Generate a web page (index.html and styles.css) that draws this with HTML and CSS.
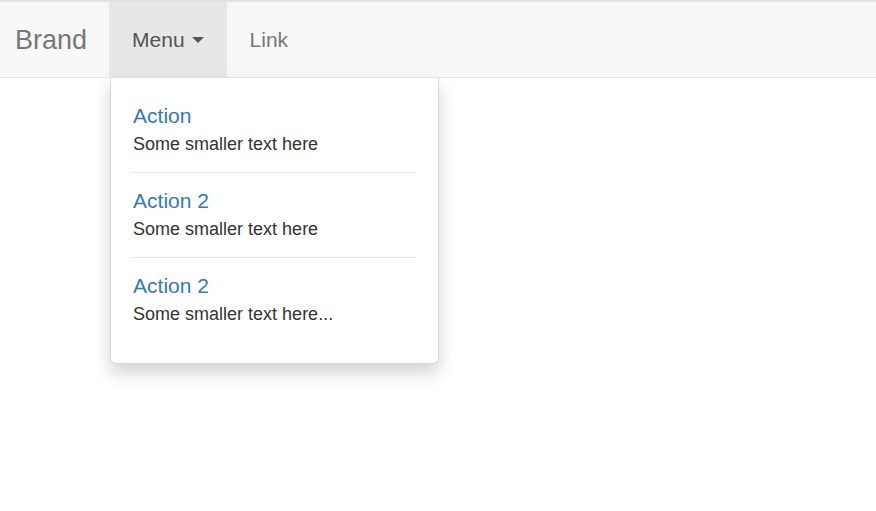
FILE: index.html
```html
<!DOCTYPE html>
<html lang="en">
<head>
<meta charset="UTF-8">
<meta name="viewport" content="width=device-width, initial-scale=1.0">
<title>Navbar dropdown</title>
<link rel="stylesheet" href="styles.css">
</head>
<body>
<nav class="navbar">
    <a class="brand" href="#">Brand</a>
    <ul class="nav">
        <li class="dropdown open">
            <a href="#" class="nav-link">Menu <span class="caret"></span></a>
            <ul class="dropdown-menu">
                <li class="item">
                    <a href="#" class="item-title">Action</a>
                    <div class="item-text">Some smaller text here</div>
                </li>
                <li class="divider"></li>
                <li class="item">
                    <a href="#" class="item-title">Action 2</a>
                    <div class="item-text">Some smaller text here</div>
                </li>
                <li class="divider"></li>
                <li class="item">
                    <a href="#" class="item-title">Action 2</a>
                    <div class="item-text">Some smaller text here...</div>
                </li>
            </ul>
        </li>
        <li><a href="#" class="nav-link">Link</a></li>
    </ul>
</nav>
</body>
</html>
```

FILE: styles.css
```css
html, body{
    min-height: 100%;
}
body{
    margin: 0;
    min-height: 100vh;
    font-family: "Liberation Sans", Arial, sans-serif;
    background-color: #fff;
    color: #333;
}
a{
    text-decoration: none;
}
.navbar{
    position: relative;
    display: flex;
    align-items: stretch;
    height: 75px;
    background-color: #f8f8f8;
    border-top: 2px solid #e2e2e2;
    border-bottom: 1px solid #e7e7e7;
}
.brand{
    display: flex;
    align-items: center;
    padding: 1px 22px 0 15px;
    font-size: 27px;
    line-height: 30px;
    color: #777;
}
.nav{
    display: flex;
    margin: 0;
    padding: 0;
    list-style: none;
}
.nav > li{
    position: relative;
    display: flex;
}
.nav-link{
    display: flex;
    align-items: center;
    padding: 1px 23px 0 23px;
    font-size: 21px;
    line-height: 30px;
    color: #777;
}
.open > .nav-link{
    background-color: #e7e7e7;
    color: #555;
}
.caret{
    display: inline-block;
    width: 0;
    height: 0;
    margin-left: 7px;
    border-top: 6px solid #555;
    border-left: 6px solid transparent;
    border-right: 6px solid transparent;
}

/* dropdown panel */
.dropdown-menu{
    position: absolute;
    top: 76px;
    left: 1px;
    z-index: 10;
    width: 327px;
    margin: 0;
    padding: 23px 0 35px 0;
    list-style: none;
    background-color: #fff;
    border: 1px solid rgba(0, 0, 0, .15);
    border-top: none;
    border-radius: 0 0 6px 6px;
    box-shadow: 0 9px 18px rgba(0, 0, 0, .175);
}
.item{
    padding: 0 22px;
}
.item-title{
    display: block;
    font-size: 21px;
    line-height: 30px;
    color: #337ab7;
}
.item-text{
    font-size: 18px;
    line-height: 27px;
    color: #333;
}
.divider{
    height: 1px;
    margin: 14px 22px 13px 22px;
    background-color: #e5e5e5;
}
```
